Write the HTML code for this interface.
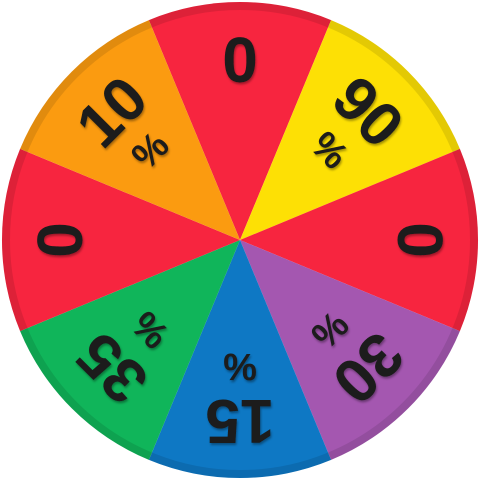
<!DOCTYPE html>
<html><head><style>html,body{margin:0;padding:0;background:#fff;width:481px;height:481px;overflow:hidden}</style></head>
<body>
<svg width="481" height="481" viewBox="0 0 481 481" xmlns="http://www.w3.org/2000/svg">
<defs>
<filter id="s" x="-20%" y="-20%" width="140%" height="140%"><feDropShadow dx="1" dy="2" stdDeviation="1" flood-color="#000" flood-opacity="0.35"/></filter>
</defs>
<path d="M240 240 L148.9 20.1 A238 238 0 0 1 331.1 20.1Z" fill="#f7253f"/>
<path d="M240 240 L331.1 20.1 A238 238 0 0 1 459.9 148.9Z" fill="#fde005"/>
<path d="M240 240 L459.9 148.9 A238 238 0 0 1 459.9 331.1Z" fill="#f7253f"/>
<path d="M240 240 L459.9 331.1 A238 238 0 0 1 331.1 459.9Z" fill="#a457b0"/>
<path d="M240 240 L331.1 459.9 A238 238 0 0 1 148.9 459.9Z" fill="#0e78c4"/>
<path d="M240 240 L148.9 459.9 A238 238 0 0 1 20.1 331.1Z" fill="#10b55a"/>
<path d="M240 240 L20.1 331.1 A238 238 0 0 1 20.1 148.9Z" fill="#f7253f"/>
<path d="M240 240 L20.1 148.9 A238 238 0 0 1 148.9 20.1Z" fill="#fb9b10"/>
<circle cx="240" cy="240" r="234" fill="none" stroke="rgba(0,0,0,0.1)" stroke-width="8"/>
<g font-family="Liberation Sans, sans-serif" font-weight="bold" fill="#1a1a1a" text-anchor="middle" filter="url(#s)">
<g><text x="240" y="82" font-size="64">0</text></g>
<g transform="rotate(45 240 240)"><text x="240" y="80" font-size="62">90</text><text x="240" y="126" font-size="38">%</text></g>
<g transform="rotate(90 240 240)"><text x="240" y="82" font-size="64">0</text></g>
<g transform="rotate(135 240 240)"><text x="240" y="80" font-size="62">30</text><text x="240" y="126" font-size="38">%</text></g>
<g transform="rotate(180 240 240)"><text x="240" y="80" font-size="62">15</text><text x="240" y="126" font-size="38">%</text></g>
<g transform="rotate(225 240 240)"><text x="240" y="80" font-size="62">35</text><text x="240" y="126" font-size="38">%</text></g>
<g transform="rotate(270 240 240)"><text x="240" y="82" font-size="64">0</text></g>
<g transform="rotate(315 240 240)"><text x="240" y="80" font-size="62">10</text><text x="240" y="126" font-size="38">%</text></g>
</g>
</svg>
</body></html>
